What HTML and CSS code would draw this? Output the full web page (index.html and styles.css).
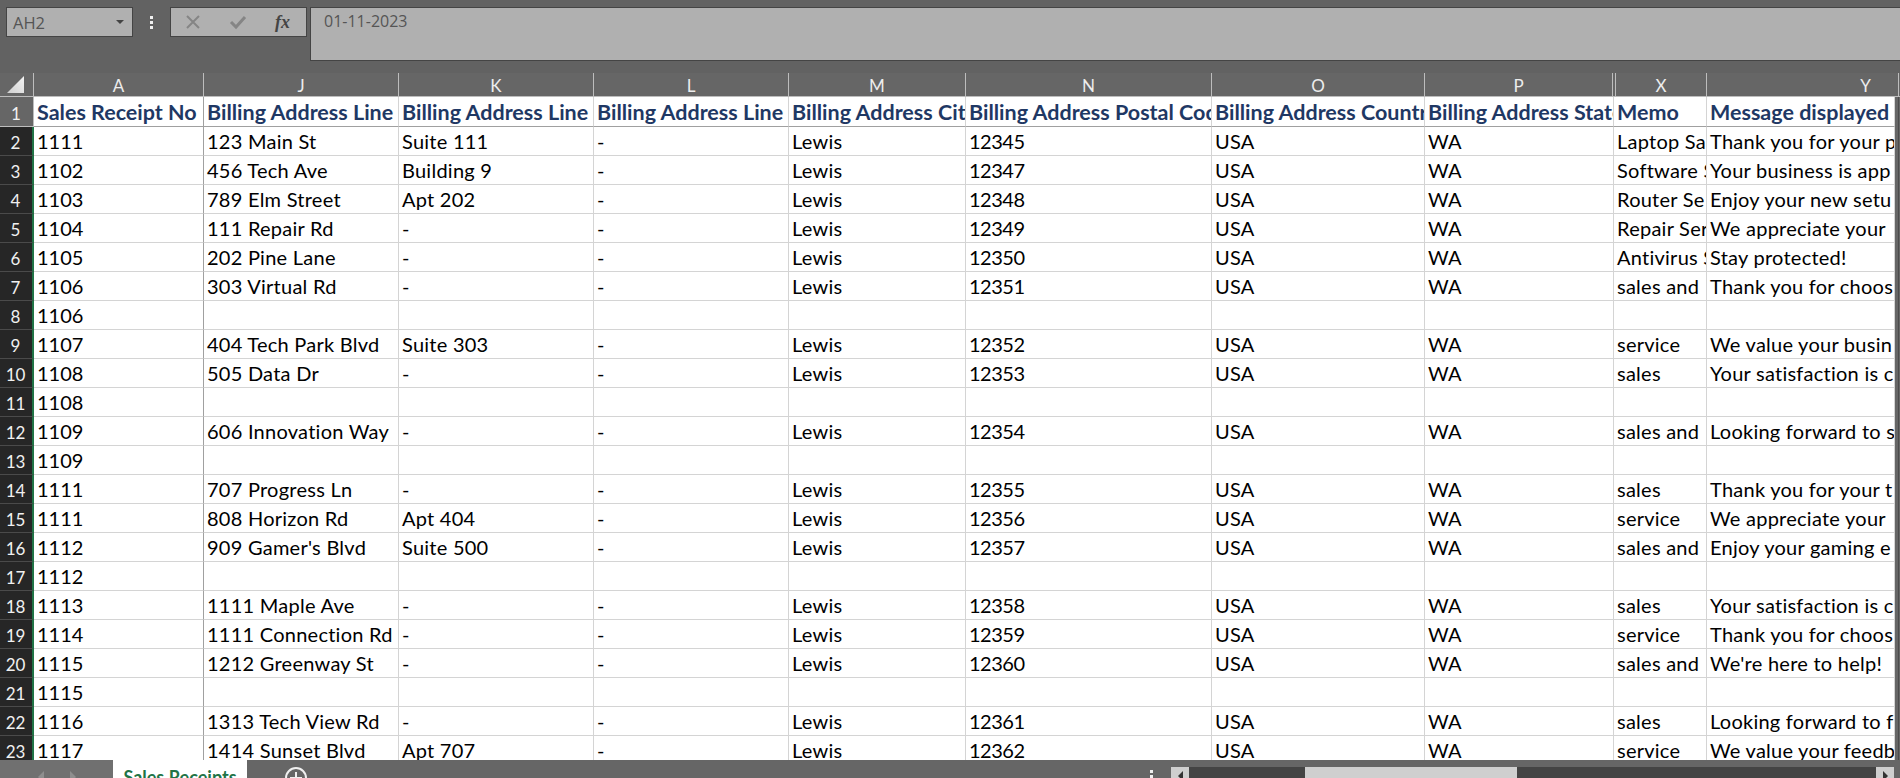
FILE: index.html
```html
<!DOCTYPE html>
<html lang="en">
<head>
<meta charset="utf-8">
<title>Sales Receipts</title>
<link rel="stylesheet" href="styles.css">
</head>
<body>
<div class="app">
  <header class="formula-area">
    <div class="name-box">
      <span class="name-value">AH2</span>
      <svg class="caret" width="10" height="6" viewBox="0 0 10 6"><path d="M1 1h8L5 5z" fill="#444"/></svg>
    </div>
    <div class="grip"><i></i><i></i><i></i></div>
    <div class="fx-buttons">
      <svg class="fx-icon" width="16" height="16" viewBox="0 0 16 16"><path d="M2 2l12 12M14 2L2 14" stroke="#858585" stroke-width="2" fill="none"/></svg>
      <svg class="fx-icon" width="18" height="16" viewBox="0 0 18 16"><path d="M2 8l5 5L16 3" stroke="#858585" stroke-width="3" fill="none"/></svg>
      <span class="fx-label">fx</span>
    </div>
    <div class="formula-input">01-11-2023</div>
  </header>

  <div class="col-heads">
    <div class="corner"><svg width="17" height="17" viewBox="0 0 17 17"><defs><linearGradient id="cg" x1="0" y1="1" x2="1" y2="0"><stop offset="0" stop-color="#cfcfcf"/><stop offset="1" stop-color="#f4f4f4"/></linearGradient></defs><path d="M0 17L17 0v17z" fill="url(#cg)"/></svg></div>
    <div class="col-head">A</div><div class="col-head">J</div><div class="col-head">K</div><div class="col-head">L</div><div class="col-head">M</div><div class="col-head">N</div><div class="col-head">O</div><div class="col-head">P</div><div class="col-head col-x">X</div><div class="col-head col-y">Y</div>
  </div>

  <main class="sheet">
    <div class="row-head row-head-top">1</div>
    <div class="cell h wall">Sales Receipt No</div><div class="cell h">Billing Address Line</div><div class="cell h">Billing Address Line</div><div class="cell h">Billing Address Line</div><div class="cell h">Billing Address City</div><div class="cell h">Billing Address Postal Code</div><div class="cell h">Billing Address Country</div><div class="cell h">Billing Address State</div><div class="cell h">Memo</div><div class="cell h">Message displayed</div>

    <div class="row-head">2</div><div class="cell wall">1111</div><div class="cell">123 Main St</div><div class="cell">Suite 111</div><div class="cell">-</div><div class="cell">Lewis</div><div class="cell">12345</div><div class="cell">USA</div><div class="cell">WA</div><div class="cell">Laptop Sa</div><div class="cell">Thank you for your p</div>
    <div class="row-head">3</div><div class="cell wall">1102</div><div class="cell">456 Tech Ave</div><div class="cell">Building 9</div><div class="cell">-</div><div class="cell">Lewis</div><div class="cell">12347</div><div class="cell">USA</div><div class="cell">WA</div><div class="cell">Software S</div><div class="cell">Your business is app</div>
    <div class="row-head">4</div><div class="cell wall">1103</div><div class="cell">789 Elm Street</div><div class="cell">Apt 202</div><div class="cell">-</div><div class="cell">Lewis</div><div class="cell">12348</div><div class="cell">USA</div><div class="cell">WA</div><div class="cell">Router Se</div><div class="cell">Enjoy your new setu</div>
    <div class="row-head">5</div><div class="cell wall">1104</div><div class="cell">111 Repair Rd</div><div class="cell">-</div><div class="cell">-</div><div class="cell">Lewis</div><div class="cell">12349</div><div class="cell">USA</div><div class="cell">WA</div><div class="cell">Repair Ser</div><div class="cell">We appreciate your</div>
    <div class="row-head">6</div><div class="cell wall">1105</div><div class="cell">202 Pine Lane</div><div class="cell">-</div><div class="cell">-</div><div class="cell">Lewis</div><div class="cell">12350</div><div class="cell">USA</div><div class="cell">WA</div><div class="cell">Antivirus S</div><div class="cell">Stay protected!</div>
    <div class="row-head">7</div><div class="cell wall">1106</div><div class="cell">303 Virtual Rd</div><div class="cell">-</div><div class="cell">-</div><div class="cell">Lewis</div><div class="cell">12351</div><div class="cell">USA</div><div class="cell">WA</div><div class="cell">sales and</div><div class="cell">Thank you for choos</div>
    <div class="row-head">8</div><div class="cell wall">1106</div><div class="cell"></div><div class="cell"></div><div class="cell"></div><div class="cell"></div><div class="cell"></div><div class="cell"></div><div class="cell"></div><div class="cell"></div><div class="cell"></div>
    <div class="row-head">9</div><div class="cell wall">1107</div><div class="cell">404 Tech Park Blvd</div><div class="cell">Suite 303</div><div class="cell">-</div><div class="cell">Lewis</div><div class="cell">12352</div><div class="cell">USA</div><div class="cell">WA</div><div class="cell">service</div><div class="cell">We value your busin</div>
    <div class="row-head">10</div><div class="cell wall">1108</div><div class="cell">505 Data Dr</div><div class="cell">-</div><div class="cell">-</div><div class="cell">Lewis</div><div class="cell">12353</div><div class="cell">USA</div><div class="cell">WA</div><div class="cell">sales</div><div class="cell">Your satisfaction is c</div>
    <div class="row-head">11</div><div class="cell wall">1108</div><div class="cell"></div><div class="cell"></div><div class="cell"></div><div class="cell"></div><div class="cell"></div><div class="cell"></div><div class="cell"></div><div class="cell"></div><div class="cell"></div>
    <div class="row-head">12</div><div class="cell wall">1109</div><div class="cell">606 Innovation Way</div><div class="cell">-</div><div class="cell">-</div><div class="cell">Lewis</div><div class="cell">12354</div><div class="cell">USA</div><div class="cell">WA</div><div class="cell">sales and</div><div class="cell">Looking forward to s</div>
    <div class="row-head">13</div><div class="cell wall">1109</div><div class="cell"></div><div class="cell"></div><div class="cell"></div><div class="cell"></div><div class="cell"></div><div class="cell"></div><div class="cell"></div><div class="cell"></div><div class="cell"></div>
    <div class="row-head">14</div><div class="cell wall">1111</div><div class="cell">707 Progress Ln</div><div class="cell">-</div><div class="cell">-</div><div class="cell">Lewis</div><div class="cell">12355</div><div class="cell">USA</div><div class="cell">WA</div><div class="cell">sales</div><div class="cell">Thank you for your t</div>
    <div class="row-head">15</div><div class="cell wall">1111</div><div class="cell">808 Horizon Rd</div><div class="cell">Apt 404</div><div class="cell">-</div><div class="cell">Lewis</div><div class="cell">12356</div><div class="cell">USA</div><div class="cell">WA</div><div class="cell">service</div><div class="cell">We appreciate your</div>
    <div class="row-head">16</div><div class="cell wall">1112</div><div class="cell">909 Gamer's Blvd</div><div class="cell">Suite 500</div><div class="cell">-</div><div class="cell">Lewis</div><div class="cell">12357</div><div class="cell">USA</div><div class="cell">WA</div><div class="cell">sales and</div><div class="cell">Enjoy your gaming e</div>
    <div class="row-head">17</div><div class="cell wall">1112</div><div class="cell"></div><div class="cell"></div><div class="cell"></div><div class="cell"></div><div class="cell"></div><div class="cell"></div><div class="cell"></div><div class="cell"></div><div class="cell"></div>
    <div class="row-head">18</div><div class="cell wall">1113</div><div class="cell">1111 Maple Ave</div><div class="cell">-</div><div class="cell">-</div><div class="cell">Lewis</div><div class="cell">12358</div><div class="cell">USA</div><div class="cell">WA</div><div class="cell">sales</div><div class="cell">Your satisfaction is c</div>
    <div class="row-head">19</div><div class="cell wall">1114</div><div class="cell">1111 Connection Rd</div><div class="cell">-</div><div class="cell">-</div><div class="cell">Lewis</div><div class="cell">12359</div><div class="cell">USA</div><div class="cell">WA</div><div class="cell">service</div><div class="cell">Thank you for choos</div>
    <div class="row-head">20</div><div class="cell wall">1115</div><div class="cell">1212 Greenway St</div><div class="cell">-</div><div class="cell">-</div><div class="cell">Lewis</div><div class="cell">12360</div><div class="cell">USA</div><div class="cell">WA</div><div class="cell">sales and</div><div class="cell">We're here to help!</div>
    <div class="row-head">21</div><div class="cell wall">1115</div><div class="cell"></div><div class="cell"></div><div class="cell"></div><div class="cell"></div><div class="cell"></div><div class="cell"></div><div class="cell"></div><div class="cell"></div><div class="cell"></div>
    <div class="row-head">22</div><div class="cell wall">1116</div><div class="cell">1313 Tech View Rd</div><div class="cell">-</div><div class="cell">-</div><div class="cell">Lewis</div><div class="cell">12361</div><div class="cell">USA</div><div class="cell">WA</div><div class="cell">sales</div><div class="cell">Looking forward to f</div>
    <div class="row-head">23</div><div class="cell wall">1117</div><div class="cell">1414 Sunset Blvd</div><div class="cell">Apt 707</div><div class="cell">-</div><div class="cell">Lewis</div><div class="cell">12362</div><div class="cell">USA</div><div class="cell">WA</div><div class="cell">service</div><div class="cell">We value your feedb</div>
  </main>

  <footer class="tab-bar">
    <div class="tab-nav">
      <svg width="7" height="12" viewBox="0 0 7 12"><path d="M6 0v12L0 6z" fill="#8e8e8e"/></svg>
      <svg width="7" height="12" viewBox="0 0 7 12"><path d="M1 0v12l6-6z" fill="#8e8e8e"/></svg>
    </div>
    <div class="tab">Sales Receipts</div>
    <svg class="add-sheet" width="24" height="24" viewBox="0 0 24 24"><circle cx="12" cy="12" r="10" fill="none" stroke="#f0f0f0" stroke-width="2"/><path d="M12 6v12M6 12h12" stroke="#f0f0f0" stroke-width="2"/></svg>
    <div class="tab-grip"><i></i><i></i></div>
    <div class="h-scroll">
      <div class="scroll-btn"><svg width="7" height="10" viewBox="0 0 7 10"><path d="M6 0v10L1 5z" fill="#333"/></svg></div>
      <div class="scroll-track"><div class="scroll-thumb"></div></div>
      <div class="scroll-btn"><svg width="7" height="10" viewBox="0 0 7 10"><path d="M1 0v10l5-5z" fill="#333"/></svg></div>
    </div>
  </footer>
</div>
</body>
</html>
```

FILE: styles.css
```css
* { box-sizing: border-box; }
html, body { margin: 0; padding: 0; }
body { width: 1900px; height: 778px; overflow: hidden; background: #666; }

.app { display: flex; flex-direction: column; width: 1900px; height: 778px; overflow: hidden; }

.formula-area {
  height: 73px; flex: none; display: flex; align-items: flex-start;
  padding: 7px 0 0 6px; background: #626262;
  font-family: "Open Sans", sans-serif; color: #555;
}
.name-box {
  width: 127px; height: 30px; display: flex; align-items: center; justify-content: space-between;
  padding: 0 7px 0 6px; background: #b0b0b0; border: 1px solid #444; font-size: 16.5px;
}
.caret { flex: none; }
.grip { width: 37px; height: 30px; display: flex; flex-direction: column; align-items: center; justify-content: center; gap: 2px; }
.grip i { display: block; width: 3px; height: 3px; background: #f0f0f0; }
.fx-buttons {
  width: 137px; height: 30px; display: flex; align-items: center; justify-content: space-between;
  padding: 0 16px 0 14px; background: #b0b0b0; border: 1px solid #444;
}
.fx-label { font: italic bold 18px "Liberation Serif", serif; color: #444; }
.formula-input {
  flex: 1; height: 54px; margin-left: 3px; padding: 2px 0 0 13px;
  background: #b0b0b0; border: 1px solid #444; border-right: 0; font-size: 16px;
}

.col-heads {
  flex: none; height: 24px; display: grid;
  grid-template-columns: 34px 170px 195px 195px 195px 177px 246px 213px 188px 94px 192px;
  background: #666; border-bottom: 1px solid #bdbdbd;
  font-family: Lato, sans-serif; font-size: 17px; color: #ededed;
}
.corner { border-right: 1px solid #bdbdbd; display: flex; align-items: flex-end; justify-content: center; padding: 0 3px 3px 0; }
.corner svg { display: block; }
.col-head { display: flex; align-items: flex-end; justify-content: center; border-right: 1px solid #bdbdbd; }
.col-x { margin-left: 2px; border-left: 1px solid #bdbdbd; }
.col-y { padding-left: 126px; }

.sheet {
  flex: none; height: 663px; overflow: hidden; display: grid;
  grid-template-columns: 34px 170px 195px 195px 195px 177px 246px 213px 189px 93px 188px;
  grid-template-rows: 30px repeat(22, 29px);
  font-family: Lato, sans-serif; font-size: 20px; color: #000;
  background: linear-gradient(90deg, #666 1898px, #4c4c4c 1898px, #4c4c4c 1899px, #666 1899px);
  justify-content: start;
}
.row-head {
  display: flex; align-items: flex-end; justify-content: center;
  background: #262626; color: #f0f0f0; font-size: 17px;
  border-right: 2px solid #217346; border-bottom: 1px solid #4a4a4a; padding: 0 1px 2px 0;
}
.row-head-top { background: #666; border-right: 1px solid #bdbdbd; border-bottom: 1px solid #bdbdbd; }
.cell {
  display: block; overflow: hidden; white-space: nowrap; background: #fff;
  border-right: 1px solid #d4d4d4; border-bottom: 1px solid #d4d4d4;
  padding: 2px 0 0 3px; line-height: 25px; letter-spacing: .25px;
}
.cell:nth-child(11n+7) { letter-spacing: -.5px; }
.cell.wall { border-right-color: #a0a0a0; letter-spacing: 0; }
.cell.h { font-weight: 700; font-size: 21.5px; color: #1f3864; border-bottom-color: #a0a0a0; padding-top: 3px; letter-spacing: 0; }

.tab-bar { flex: 1; display: flex; align-items: flex-start; background: #666; overflow: hidden; height: 18px; }
.tab-nav { flex: none; width: 113px; height: 18px; background: #707070; display: flex; justify-content: center; gap: 24px; padding-top: 11px; }
.tab {
  flex: none; width: 134px; height: 18px; background: #fff; color: #217346; text-align: center;
  font: 700 18px/30px Lato, sans-serif; padding-top: 2px;
}
.add-sheet { flex: none; margin: 6px 0 0 37px; }
.tab-grip { flex: none; margin: 10px 0 0 842px; width: 4px; display: flex; flex-direction: column; gap: 2px; }
.tab-grip i { display: block; width: 3px; height: 3px; background: #f0f0f0; }
.h-scroll { flex: none; display: flex; margin: 7px 0 0 17px; width: 723px; height: 18px; }
.scroll-btn { flex: none; width: 18px; height: 18px; background: #cfcfcf; display: flex; align-items: center; justify-content: center; }
.scroll-track { flex: 1; background: #444; padding-left: 116px; }
.scroll-thumb { width: 212px; height: 100%; background: #cfcfcf; }
```
